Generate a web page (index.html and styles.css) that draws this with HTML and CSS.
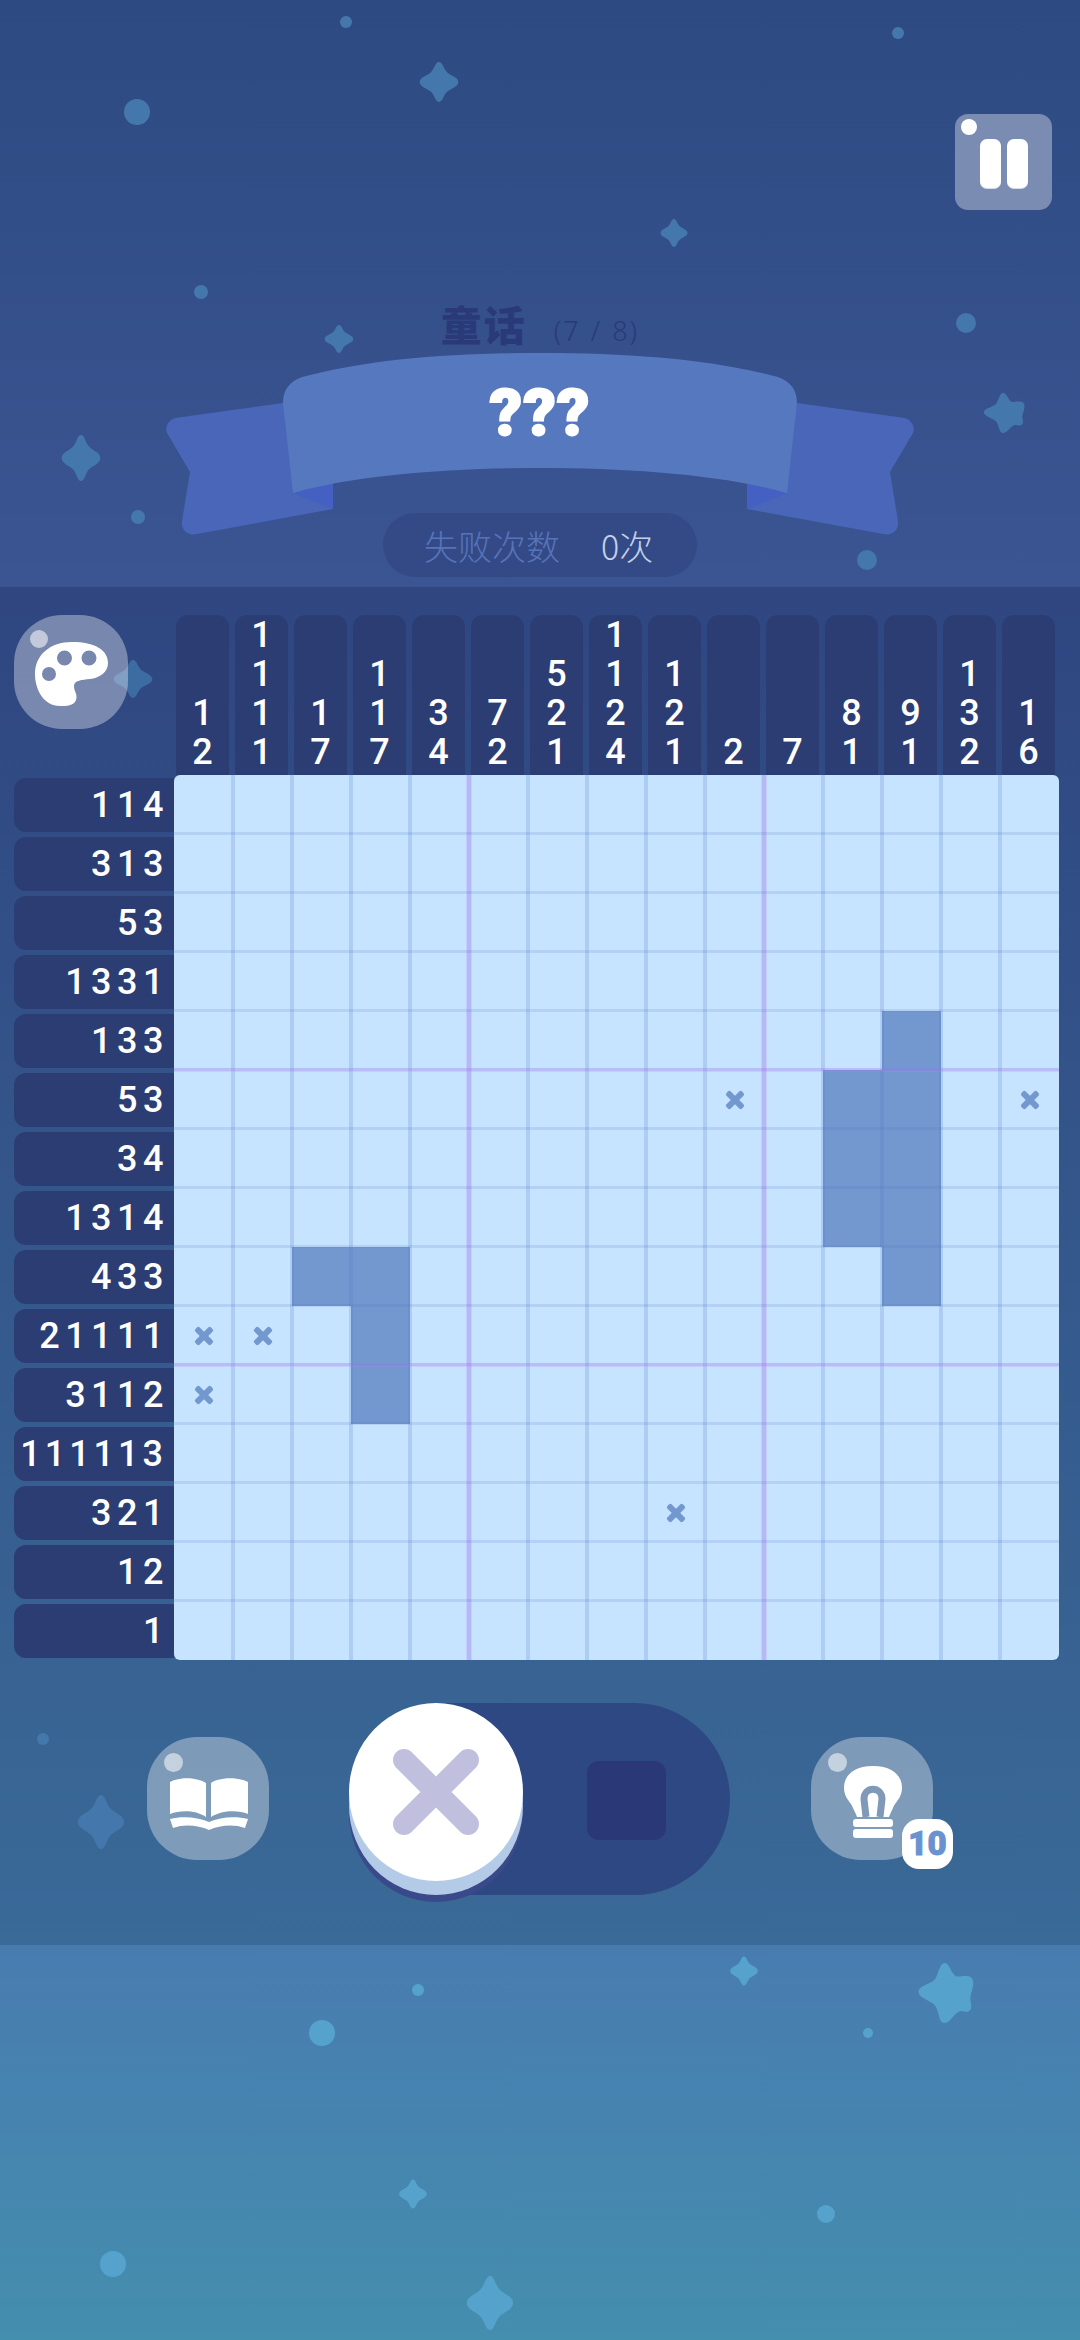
FILE: index.html
```html
<!DOCTYPE html>
<html lang="zh">
<head>
<meta charset="utf-8">
<title>童话</title>
<link rel="stylesheet" href="styles.css">
</head>
<body>
<svg class="defs" width="0" height="0" aria-hidden="true">
  <defs>
    <path id="s4" d="M0-50C8-50 9-34 18-24 26-16 42-12 42 0 42 12 26 16 18 24 9 34 8 50 0 50-8 50-9 34-18 24-26 16-42 12-42 0-42-12-26-16-18-24-9-34-8-50 0-50Z"/>
    <path id="s5" d="M-4-50C4-50 6-34 14-28 22-26 40-34 42-20 44-8 36 2 38 14 42 28 36 34 24 30 14 28 6 50-4 50-14 50-12 30-20 20-28 12-46 8-46-2-46-12-28-14-20-22-14-30-12-50-4-50Z"/>
  </defs>
</svg>
<main class="page">
  <header class="top">
    <svg class="stars stars-a" viewBox="0 0 1080 587" aria-hidden="true">
      <circle cx="346" cy="22" r="6"/><circle cx="898" cy="33" r="6"/><circle cx="137" cy="112" r="13"/><circle cx="201" cy="292" r="7"/><circle cx="966" cy="323" r="10"/><circle cx="138" cy="517" r="7"/><circle cx="867" cy="560" r="10"/>
      <use href="#s4" transform="translate(439 82) scale(.46 .4)"/>
      <use href="#s4" transform="translate(674 233) scale(.32 .28)"/>
      <use href="#s4" transform="translate(339 339) scale(.34 .28)"/>
      <use href="#s4" transform="translate(81 458) scale(.46 .46)"/>
      <use href="#s5" transform="translate(1005 413) scale(.46 .4)"/>
    </svg>
    <div class="pause-row">
      <button class="btn-pause" aria-label="暂停"><span class="gloss"></span><span class="bar"></span><span class="bar"></span></button>
    </div>
    <h1 class="title"><span class="title-name">童话</span><span class="title-count">(7 / 8)</span></h1>
    <div class="ribbon">
      <svg class="ribbon-art" viewBox="0 0 780 200" aria-hidden="true">
        <path class="tail" d="M133 50 25 65C17 68 15 75 17 80L40 119 32 168C31 178 38 183 47 181L183 156V130Z"/>
        <path class="tail" d="M647 50 755 65C763 68 765 75 763 80L740 119 748 168C749 178 742 183 733 181L597 156V130Z"/>
        <path class="fold" d="M143 140 183 156V130Z"/>
        <path class="fold" d="M637 140 597 156V130Z"/>
        <path class="band" d="M133 50C133 37 139 29 152 24 220 6 300 0 390 0 480 0 560 6 628 24 641 29 647 37 647 50L637 140C575 122 480 115 390 115 300 115 205 122 143 140Z"/>
      </svg>
      <span class="ribbon-text">???</span>
    </div>
    <div class="fails"><span class="fails-label">失败次数</span><span class="fails-value">0次</span></div>
  </header>

  <section class="mid">
    <svg class="stars stars-a" viewBox="0 0 1080 1358" aria-hidden="true">
      <use class="s-dim" href="#s4" transform="translate(133 92) scale(.46 .38)"/>
      <circle cx="43" cy="1152" r="6"/>
      <use href="#s4" transform="translate(101 1235) scale(.55 .54)"/>
    </svg>
    <div class="puzzle">
      <div class="corner">
        <button class="btn-round btn-palette" aria-label="调色板">
          <span class="gloss"></span>
          <svg class="ico-palette" viewBox="0 0 74 66" aria-hidden="true">
            <path fill-rule="evenodd" d="M37 0C60 0 73 8 73 21 73 30 65 36 55 37 47 38 39 38 39 44 39 50 43 52 41 58 39 64 31 64 25 64 9 64 0 48 0 32 0 13 15 0 37 0ZM29.500 8.500a7.500 7.500 0 1 0 0 15 7.500 7.500 0 1 0 0-15ZM54 8.500a7.500 7.500 0 1 0 0 15 7.500 7.500 0 1 0 0-15ZM14 25a7 7 0 1 0 0 14 7 7 0 1 0 0-14Z"/>
          </svg>
        </button>
      </div>
      <div class="col-clues">
        <div class="col-clue"><span>1</span><span>2</span></div>
        <div class="col-clue"><span>1</span><span>1</span><span>1</span><span>1</span></div>
        <div class="col-clue"><span>1</span><span>7</span></div>
        <div class="col-clue"><span>1</span><span>1</span><span>7</span></div>
        <div class="col-clue"><span>3</span><span>4</span></div>
        <div class="col-clue"><span>7</span><span>2</span></div>
        <div class="col-clue"><span>5</span><span>2</span><span>1</span></div>
        <div class="col-clue"><span>1</span><span>1</span><span>2</span><span>4</span></div>
        <div class="col-clue"><span>1</span><span>2</span><span>1</span></div>
        <div class="col-clue"><span>2</span></div>
        <div class="col-clue"><span>7</span></div>
        <div class="col-clue"><span>8</span><span>1</span></div>
        <div class="col-clue"><span>9</span><span>1</span></div>
        <div class="col-clue"><span>1</span><span>3</span><span>2</span></div>
        <div class="col-clue"><span>1</span><span>6</span></div>
      </div>
      <div class="row-clues">
        <div class="row-clue">114</div>
        <div class="row-clue">313</div>
        <div class="row-clue">53</div>
        <div class="row-clue">1331</div>
        <div class="row-clue">133</div>
        <div class="row-clue">53</div>
        <div class="row-clue">34</div>
        <div class="row-clue">1314</div>
        <div class="row-clue">433</div>
        <div class="row-clue">21111</div>
        <div class="row-clue">3112</div>
        <div class="row-clue tight">111113</div>
        <div class="row-clue">321</div>
        <div class="row-clue">12</div>
        <div class="row-clue">1</div>
      </div>
      <div class="board">
        <i></i><i></i><i></i><i></i><i></i><i></i><i></i><i></i><i></i><i></i><i></i><i></i><i></i><i></i><i></i>
        <i></i><i></i><i></i><i></i><i></i><i></i><i></i><i></i><i></i><i></i><i></i><i></i><i></i><i></i><i></i>
        <i></i><i></i><i></i><i></i><i></i><i></i><i></i><i></i><i></i><i></i><i></i><i></i><i></i><i></i><i></i>
        <i></i><i></i><i></i><i></i><i></i><i></i><i></i><i></i><i></i><i></i><i></i><i></i><i></i><i></i><i></i>
        <i></i><i></i><i></i><i></i><i></i><i></i><i></i><i></i><i></i><i></i><i></i><i></i><i class="on"></i><i></i><i></i>
        <i></i><i></i><i></i><i></i><i></i><i></i><i></i><i></i><i></i><i class="no"></i><i></i><i class="on"></i><i class="on"></i><i></i><i class="no"></i>
        <i></i><i></i><i></i><i></i><i></i><i></i><i></i><i></i><i></i><i></i><i></i><i class="on"></i><i class="on"></i><i></i><i></i>
        <i></i><i></i><i></i><i></i><i></i><i></i><i></i><i></i><i></i><i></i><i></i><i class="on"></i><i class="on"></i><i></i><i></i>
        <i></i><i></i><i class="on"></i><i class="on"></i><i></i><i></i><i></i><i></i><i></i><i></i><i></i><i></i><i class="on"></i><i></i><i></i>
        <i class="no"></i><i class="no"></i><i></i><i class="on"></i><i></i><i></i><i></i><i></i><i></i><i></i><i></i><i></i><i></i><i></i><i></i>
        <i class="no"></i><i></i><i></i><i class="on"></i><i></i><i></i><i></i><i></i><i></i><i></i><i></i><i></i><i></i><i></i><i></i>
        <i></i><i></i><i></i><i></i><i></i><i></i><i></i><i></i><i></i><i></i><i></i><i></i><i></i><i></i><i></i>
        <i></i><i></i><i></i><i></i><i></i><i></i><i></i><i></i><i class="no"></i><i></i><i></i><i></i><i></i><i></i><i></i>
        <i></i><i></i><i></i><i></i><i></i><i></i><i></i><i></i><i></i><i></i><i></i><i></i><i></i><i></i><i></i>
        <i></i><i></i><i></i><i></i><i></i><i></i><i></i><i></i><i></i><i></i><i></i><i></i><i></i><i></i><i></i>
      </div>
    </div>
    <div class="tools">
      <button class="btn-round btn-tool" aria-label="规则">
        <span class="gloss"></span>
        <svg class="ico-book" viewBox="0 0 78 54" aria-hidden="true">
          <path d="M0 5C10 0 26 0 36 6V40C26 33 10 33 0 37ZM41 6C50 0 68 0 78 5V37C68 33 52 33 41 40ZM0 42C12 39 28 40 39 45 50 40 66 39 78 42L75 51C64 47 50 48 39 53 28 48 14 47 3 51Z"/>
        </svg>
      </button>
      <div class="toggle">
        <div class="knob">
          <svg class="ico-x" viewBox="0 0 88 88" aria-hidden="true"><path d="M12 12 76 76M76 12 12 76"/></svg>
        </div>
        <span class="toggle-square"></span>
      </div>
      <button class="btn-round btn-tool btn-hint" aria-label="提示">
        <span class="gloss"></span>
        <svg class="ico-bulb" viewBox="0 0 60 72" aria-hidden="true">
          <path d="M30 0C50 0 59 10 59 22 59 32 52 36 50 42 48 46 47 48 46 51H14C13 48 12 46 10 42 8 36 1 32 1 22 1 10 10 0 30 0Z"/>
          <path class="bulb-arch" d="M23 51 21 33C21 20 39 20 39 33L37 51"/>
          <rect x="10" y="53" width="40" height="8" rx="3"/>
          <rect x="10" y="63" width="40" height="9" rx="3"/>
        </svg>
        <span class="badge">10</span>
      </button>
    </div>
  </section>

  <footer class="bottom">
    <svg class="stars stars-b" viewBox="0 0 1080 395" aria-hidden="true">
      <circle cx="418" cy="45" r="6"/><circle cx="322" cy="88" r="13"/><circle cx="868" cy="88" r="5"/><circle cx="826" cy="269" r="9"/><circle cx="113" cy="319" r="13"/>
      <use href="#s4" transform="translate(744 26) scale(.33 .29)"/>
      <use href="#s5" transform="translate(947 48) scale(.62 .6)"/>
      <use href="#s4" transform="translate(413 249) scale(.33 .29)"/>
      <use href="#s4" transform="translate(490 358) scale(.55 .54)"/>
    </svg>
  </footer>
</main>
</body>
</html>
```
FILE: styles.css
```css
* { box-sizing: border-box; }
html, body { margin: 0; padding: 0; }
body { width: 1080px; height: 2340px; overflow: hidden; font-family: Roboto, "Noto Sans CJK SC", sans-serif; }
button { border: 0; padding: 0; font: inherit; }
.defs { position: absolute; }
.page { width: 1080px; height: 2340px; display: flex; flex-direction: column; }

.stars { position: absolute; left: 0; top: 0; width: 1080px; height: 100%; }
.stars-a { fill: #4478ad; }
.stars-b { fill: #55a3cd; }
.s-dim { fill: #3c6ca2; }

/* top */
.top { position: relative; height: 587px; display: flex; flex-direction: column; align-items: center; background: linear-gradient(#2d4a82, #3b5592); }
.title, .ribbon, .fails { position: relative; }
.pause-row { width: 100%; height: 114px; flex: none; }
.btn-pause { position: absolute; left: 955px; top: 114px; width: 97px; height: 96px; border-radius: 13px; background: #7b8cb3; display: flex; gap: 6px; justify-content: center; align-items: center; padding-left: 1px; }
.bar { width: 21px; height: 49px; margin-top: 2px; border-radius: 7px; background: #fff; box-shadow: 0 1px 0 #d5dcec; }
.gloss { position: absolute; border-radius: 50%; background: rgba(255,255,255,.55); }
.btn-pause .gloss { left: 6px; top: 5px; width: 16px; height: 16px; background: #fff; }

.title { margin: 184px 0 0; height: 55px; display: flex; align-items: baseline; gap: 27px; color: #2a3a78; font-weight: 400; font-family: "Noto Sans CJK SC", sans-serif; }
.title-name { font-size: 41px; line-height: 50px; font-weight: 900; letter-spacing: 2px; }
.title-count { font-size: 27px; font-weight: 300; letter-spacing: 2px; word-spacing: 1px; font-family: "Noto Sans", sans-serif; }

.ribbon { width: 780px; height: 160px; flex: none; display: flex; justify-content: center; align-items: center; }
.ribbon-art { position: absolute; left: 0; top: 0; width: 780px; height: 200px; overflow: visible; }
.tail { fill: #4966b9; }
.fold { fill: #4360c2; }
.band { fill: #5678bf; }
.bulb-arch { fill: #fff; stroke: #8099b8; stroke-width: 7px; stroke-linecap: butt; }
.ribbon-text { position: relative; color: #fff; font-size: 64px; line-height: 72px; font-weight: 900; font-family: Roboto, sans-serif; letter-spacing: 1px; -webkit-text-stroke: 2px #fff; margin-top: -38px; }

.fails { width: 314px; height: 64px; border-radius: 32px; background: #344a86; display: flex; align-items: center; padding-left: 41px; font-family: "Noto Sans CJK SC", sans-serif; font-weight: 300; font-size: 34px; }
.fails-label { color: #5674ba; }
.fails-value { color: #c4d0ea; margin-left: 41px; }

/* middle */
.mid { position: relative; height: 1358px; background: linear-gradient(#2f4681, #3a6a97); }
.puzzle { position: relative; display: grid; grid-template-columns: 160px 885px; grid-template-rows: 160px 885px; margin: 28px 0 0 14px; }
.btn-round { position: relative; display: block; background: rgba(255,255,255,.35); }
.btn-palette { width: 114px; height: 114px; border-radius: 48px; }
.btn-palette .gloss { left: 16px; top: 15px; width: 18px; height: 18px; }
.ico-palette { position: absolute; left: 21px; top: 27px; width: 74px; height: 66px; fill: #fff; }

.col-clues { display: grid; grid-template-columns: repeat(15, 59px); }
.col-clue { width: 53px; margin-left: 2px; height: 160px; border-radius: 12px 12px 0 0; background: #2c3d73; display: flex; flex-direction: column; justify-content: flex-end; align-items: center; padding-bottom: 3px; color: #fff; font-size: 36px; font-weight: 500; line-height: 39px; }
.row-clues { display: grid; grid-template-rows: repeat(15, 59px); margin-top: 3px; }
.row-clue { height: 54px; border-radius: 12px 0 0 12px; background: #2c3d73; color: #fff; font-size: 36px; font-weight: 500; line-height: 54px; text-align: right; letter-spacing: 5.5px; padding-right: 5px; }
.row-clue.tight { letter-spacing: 4px; padding-right: 7px; }

.board { position: relative; width: 885px; height: 885px; display: grid; grid-template-columns: repeat(15, 59px); grid-template-rows: repeat(15, 59px); background: #c6e4ff; border-radius: 6px; overflow: hidden; }
.board i { display: block; }
.board .on { background: #7298cf; }
.board .no { position: relative; }
.board .no::before, .board .no::after { content: ""; position: absolute; left: 18.500px; top: 26.500px; width: 22px; height: 6px; border-radius: 2px; background: #7298cf; transform: rotate(45deg); }
.board .no::after { transform: rotate(-45deg); }
.board::before, .board::after { content: ""; position: absolute; pointer-events: none; }
.board::before {
  inset: 0 3px;
  background-image:
    linear-gradient(to right, rgba(200,120,255,.22) 3px, transparent 3px, transparent 292px, rgba(200,120,255,.22) 292px),
    linear-gradient(to right, rgba(78,113,195,.2) 2px, transparent 2px, transparent 57px, rgba(78,113,195,.2) 57px);
  background-size: 295px 100%, 59px 100%;
  background-position: -3px 0, -3px 0;
}
.board::after {
  inset: 3px 0;
  background-image:
    linear-gradient(to bottom, rgba(200,120,255,.22) 2px, transparent 2px, transparent 293px, rgba(200,120,255,.22) 293px),
    linear-gradient(to bottom, rgba(78,113,195,.17) 1.500px, transparent 1.500px, transparent 57.500px, rgba(78,113,195,.17) 57.500px);
  background-size: 100% 295px, 100% 59px;
  background-position: 0 -3px, 0 -3px;
}

.tools { position: relative; display: flex; align-items: flex-start; margin: 43px 0 0 147px; }
.btn-tool { width: 122px; height: 123px; margin-top: 34px; border-radius: 50px; background: rgba(255,255,255,.35); }
.btn-tool .gloss { left: 17px; top: 16px; width: 19px; height: 19px; }
.ico-book { position: absolute; left: 23px; top: 40px; width: 78px; height: 54px; fill: #fff; }
.ico-bulb { position: absolute; left: 32px; top: 29px; width: 60px; height: 72px; fill: #fff; }
.toggle { margin-left: 80px; width: 381px; height: 192px; border-radius: 96px; background: #2d4883; position: relative; display: flex; align-items: center; justify-content: flex-end; padding-right: 64px; }
.toggle-square { width: 79px; height: 79px; border-radius: 12px; background: #2b3877; margin-top: 2px; }
.knob { position: absolute; left: 0; top: 0; width: 174px; height: 178px; border-radius: 50%; background: #fff; display: flex; align-items: center; justify-content: center; box-shadow: 0 14px 0 #b4cbe8, 0 21px 0 #39498a; }
.ico-x { width: 88px; height: 88px; fill: none; stroke: #c0c0de; stroke-width: 22px; stroke-linecap: round; }
.btn-hint { margin-left: 81px; }
.badge { position: absolute; left: 91px; top: 82px; width: 51px; height: 50px; border-radius: 17px; background: #fff; color: #6a92cf; font-size: 33px; font-weight: 900; line-height: 50px; text-align: center; letter-spacing: 0; -webkit-text-stroke: 1px #6a92cf; font-family: Roboto, sans-serif; }

/* bottom */
.bottom { position: relative; height: 395px; background: linear-gradient(#487cb0, #448eae); }
```
